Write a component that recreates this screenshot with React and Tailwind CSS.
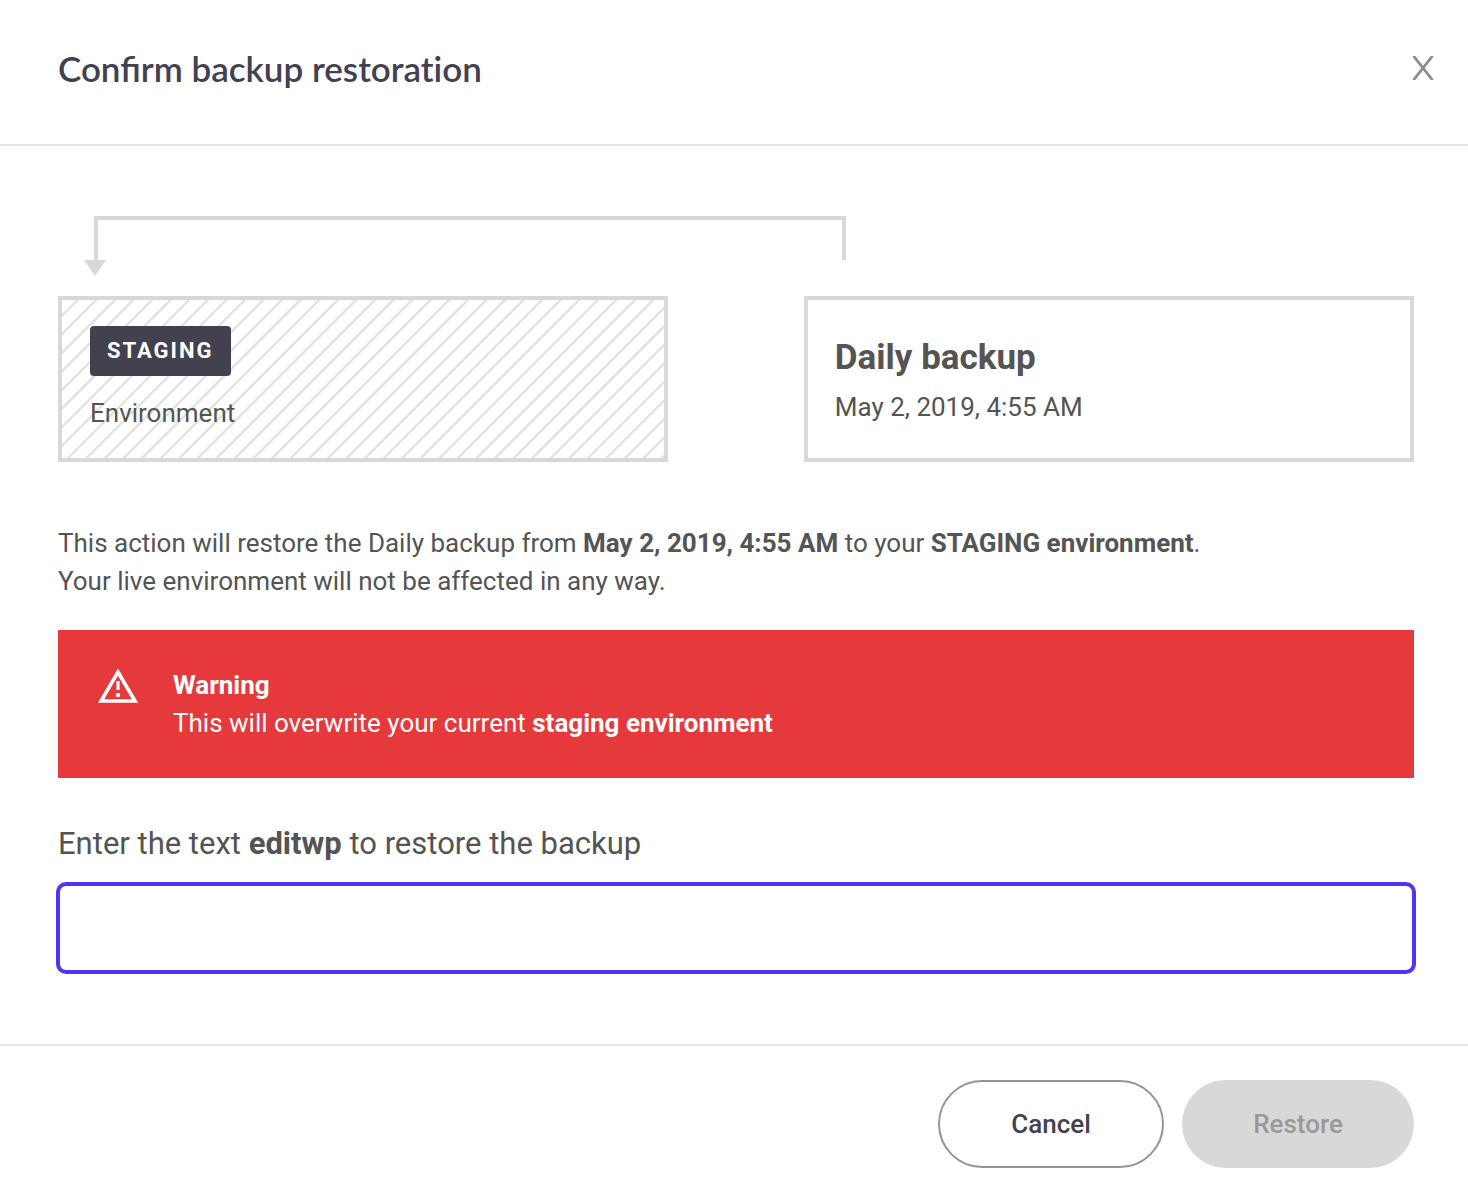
import React from "react";

function WarningIcon() {
  return (
    <svg className="w-10 h-9 mt-[2px] shrink-0" viewBox="0 0 40 36" fill="none" stroke="#fff" aria-hidden="true">
      <path d="M20 4 37 33H3Z" strokeWidth="3.6" />
      <path d="M20 13v9" strokeWidth="3.2" />
      <circle cx="20" cy="27" r="2.2" fill="#fff" stroke="none" />
    </svg>
  );
}

function Connector() {
  return (
    <div className="h-20" aria-hidden="true">
      <div className="ml-9 w-[calc(55%+6px)] h-11 border-4 border-b-0 border-[#d8d8d8]" />
      <svg className="block ml-[26px] w-[22px] h-4" viewBox="0 0 22 16">
        <path d="M0 0h22L11 16Z" fill="#d8d8d8" />
      </svg>
    </div>
  );
}

export default function App() {
  return (
    <main
      role="dialog"
      aria-labelledby="title"
      className="bg-white text-[#545454] text-[26px] leading-[38px] font-['Roboto',sans-serif]"
    >
      <header className="flex items-center justify-between h-[146px] border-b-2 border-[#e6e6e6] pl-[58px] pr-[33px] pb-2">
        <h1 id="title" className="font-['Lato',sans-serif] font-semibold text-[35px] leading-10 text-[#43404f]">
          Confirm backup <span className="[font-variant-ligatures:none]">restoration</span>
        </h1>
        <button type="button" aria-label="Close" className="w-6 h-6">
          <svg className="w-6 h-6" viewBox="0 0 24 24" fill="none" stroke="#8c8c8c" strokeWidth="2.8" aria-hidden="true">
            <path d="M2.5 0 21.5 24M21.5 0 2.5 24" />
          </svg>
        </button>
      </header>

      <div className="pl-[58px] pr-[54px] pt-[70px] pb-[70px]">
        <Connector />
        <div className="flex justify-between">
          <section className="w-[45%] h-[166px] border-4 border-[#d8d8d8] px-7 pt-[26px] bg-[repeating-linear-gradient(135deg,transparent_0%,transparent_5.2%,#e2e2e2_5.5%,#e2e2e2_6.5%,transparent_6.8%,transparent_calc(100%/14))] bg-size-[130px_130px]">
            <div className="inline-flex items-center h-[50px] px-[17px] rounded bg-[#43404f] text-white font-bold text-[22px] tracking-[2px]">
              STAGING
            </div>
            <p className="mt-[18px]">Environment</p>
          </section>
          <section className="w-[45%] h-[166px] border-4 border-[#d8d8d8] px-[27px] pt-[38px]">
            <h2 className="font-bold text-[35px] leading-10">Daily backup</h2>
            <p className="mt-[10px]">May 2, 2019, 4:55 AM</p>
          </section>
        </div>

        <p className="mt-[62px]">
          This action will restore the Daily backup from <b>May 2, 2019, 4:55 AM</b> to your{" "}
          <b>STAGING environment</b>.
          <br />
          Your live environment will not be affected in any way.
        </p>

        <div role="alert" className="flex gap-[35px] mt-[30px] px-10 py-9 bg-[#e6393c] text-white">
          <WarningIcon />
          <p>
            <b>Warning</b>
            <br />
            This will overwrite your current <b>staging environment</b>
          </p>
        </div>

        <label htmlFor="confirm" className="block mt-[46px] text-[31px] leading-10">
          Enter the text <b>editwp</b> to restore the backup
        </label>
        <div className="-mx-[2px] mt-[18px]">
          <input
            id="confirm"
            type="text"
            className="block w-full h-[92px] px-6 rounded-[10px] border-4 border-[#5333ed] outline-none"
          />
        </div>
      </div>

      <footer className="flex justify-end gap-[18px] border-t-2 border-[#e6e6e6] px-[54px] pt-[34px] pb-[26px] font-medium">
        <button type="button" className="w-[226px] h-[88px] rounded-full border-2 border-[#949494] text-[#43404f]">
          Cancel
        </button>
        <button type="button" disabled className="w-[232px] h-[88px] rounded-full bg-[#d8d8d8] text-[#999]">
          Restore
        </button>
      </footer>
    </main>
  );
}
